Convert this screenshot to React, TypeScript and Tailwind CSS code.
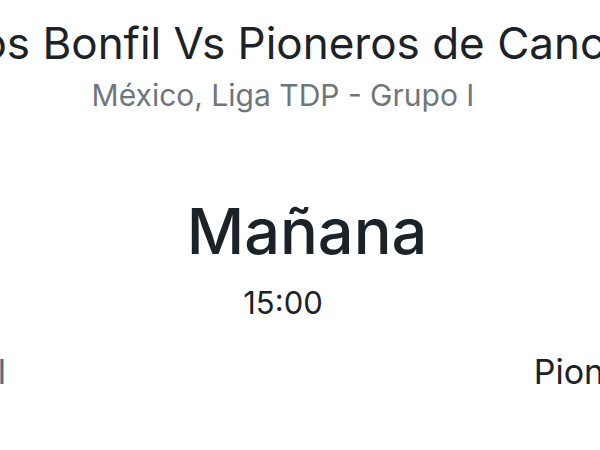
const App = () => {
  return (
    <div className="w-[600px] h-[450px] overflow-hidden bg-white font-['Inter',sans-serif] text-[#1b2228]">
      <div className="flex pt-[17px]">
        <h1 className="whitespace-nowrap text-[44px] leading-[52px] font-normal -ml-[187px]">
          Cachorros Bonfil Vs Pioneros de Cancún
        </h1>
      </div>
      <p className="text-center text-[30px] leading-[36px] text-[#6f767b] pr-[34px] mt-[8px]">México, Liga TDP - Grupo I</p>
      <div className="flex flex-col items-center pt-[82px] pr-[34px]">
        <div className="text-[63px] leading-[72px] font-medium ml-[48px]">Mañana</div>
        <div className="text-[31px] leading-[38px] mt-[17px]">15:00</div>
      </div>
      <div className="flex justify-between items-center mt-[30px] whitespace-nowrap">
        <a className="text-[34px] leading-[40px] text-[#4c6b89] -ml-[263px]">Cachorros Bonfil</a>
        <span className="text-[34px] leading-[40px] -mr-[258px]">Pioneros de Cancún</span>
      </div>
    </div>
  )
}
export default App
